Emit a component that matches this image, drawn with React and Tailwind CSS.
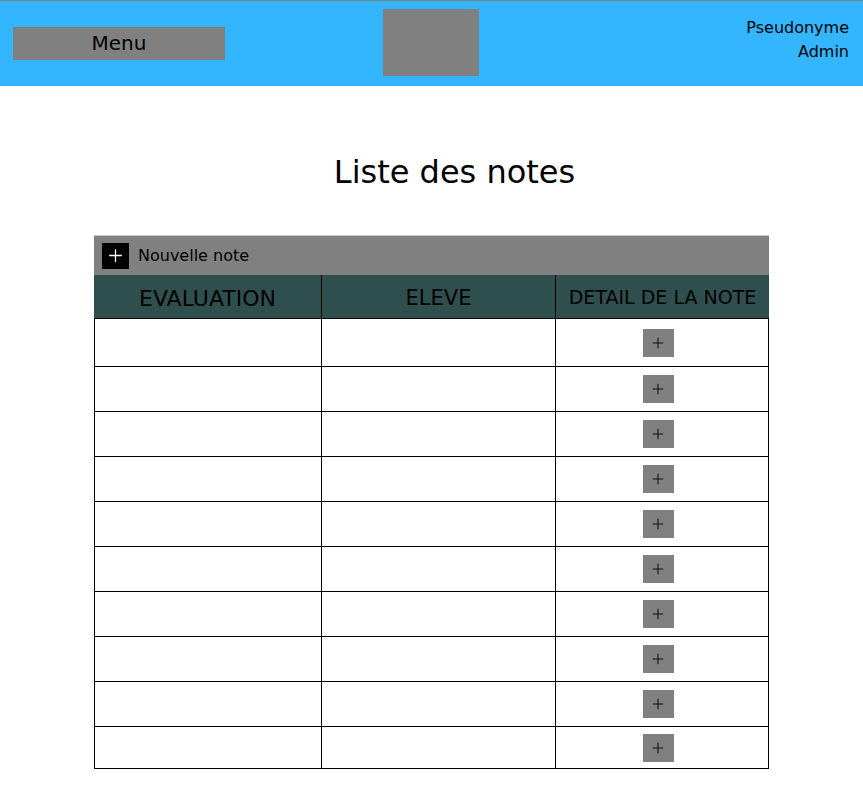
const rows = [48, 45, 45, 45, 45, 45, 45, 45, 45, 41];

function PlusIcon({ className }) {
  return (
    <svg viewBox="0 0 16 16" className={className} fill="none" stroke="currentColor" strokeWidth="1.2">
      <path d="M8 2v12M2 8h12" />
    </svg>
  );
}

export default function App() {
  return (
    <div className="min-h-[799px] bg-white text-black" style={{ fontFamily: '"DejaVu Sans", sans-serif' }}>
      <header className="h-[86px] bg-[#33b5ff] border-t border-[#808080] flex items-start">
        <button className="mt-[26px] ml-[13px] w-[212px] h-[33px] bg-[#808080] text-[20px] leading-[33px] text-center">
          Menu
        </button>
        <div className="mt-[8px] ml-[158px] w-[96px] h-[67px] bg-[#808080]" />
        <div className="ml-auto mt-[15px] mr-[14px] text-right text-[16px] leading-[24px]">
          <div>Pseudonyme</div>
          <div>Admin</div>
        </div>
      </header>

      <h1 className="mt-[66px] text-center text-[32px] leading-[40px] pl-[46px]">Liste des notes</h1>

      <div className="mt-[43px] ml-[94px] w-[675px]">
        <div className="h-[40px] bg-[#808080] border-t border-[#c8c8c8] flex items-center pl-[8px] gap-[9px]">
          <span className="w-[27px] h-[26px] bg-black text-white flex items-center justify-center">
            <PlusIcon className="w-[17px] h-[17px]" />
          </span>
          <span className="text-[16px]">Nouvelle note</span>
        </div>
        <div className="flex h-[44px] bg-[#2f4f4f] border-b border-black">
          <div className="w-[228px] flex items-center justify-center pt-[4px] text-[22px] border-r border-black">EVALUATION</div>
          <div className="w-[234px] flex items-center justify-center pt-[4px] text-[21px] border-r border-black">ELEVE</div>
          <div className="flex-1 flex items-center justify-center pt-[2px] text-[19px]">DETAIL DE LA NOTE</div>
        </div>
        <div className="border-l border-r border-b border-black">
          {rows.map((h, i) => (
            <div
              key={i}
              className={"flex " + (i < rows.length - 1 ? "border-b border-black" : "")}
              style={{ height: h }}
            >
              <div className="w-[227px] border-r border-black" />
              <div className="w-[234px] border-r border-black" />
              <div className="flex-1 flex items-center justify-center pr-[8px]">
                <button className="w-[31px] h-[28px] bg-[#808080] flex items-center justify-center text-[#111]">
                  <PlusIcon className="w-[14px] h-[14px]" />
                </button>
              </div>
            </div>
          ))}
        </div>
      </div>
    </div>
  );
}
